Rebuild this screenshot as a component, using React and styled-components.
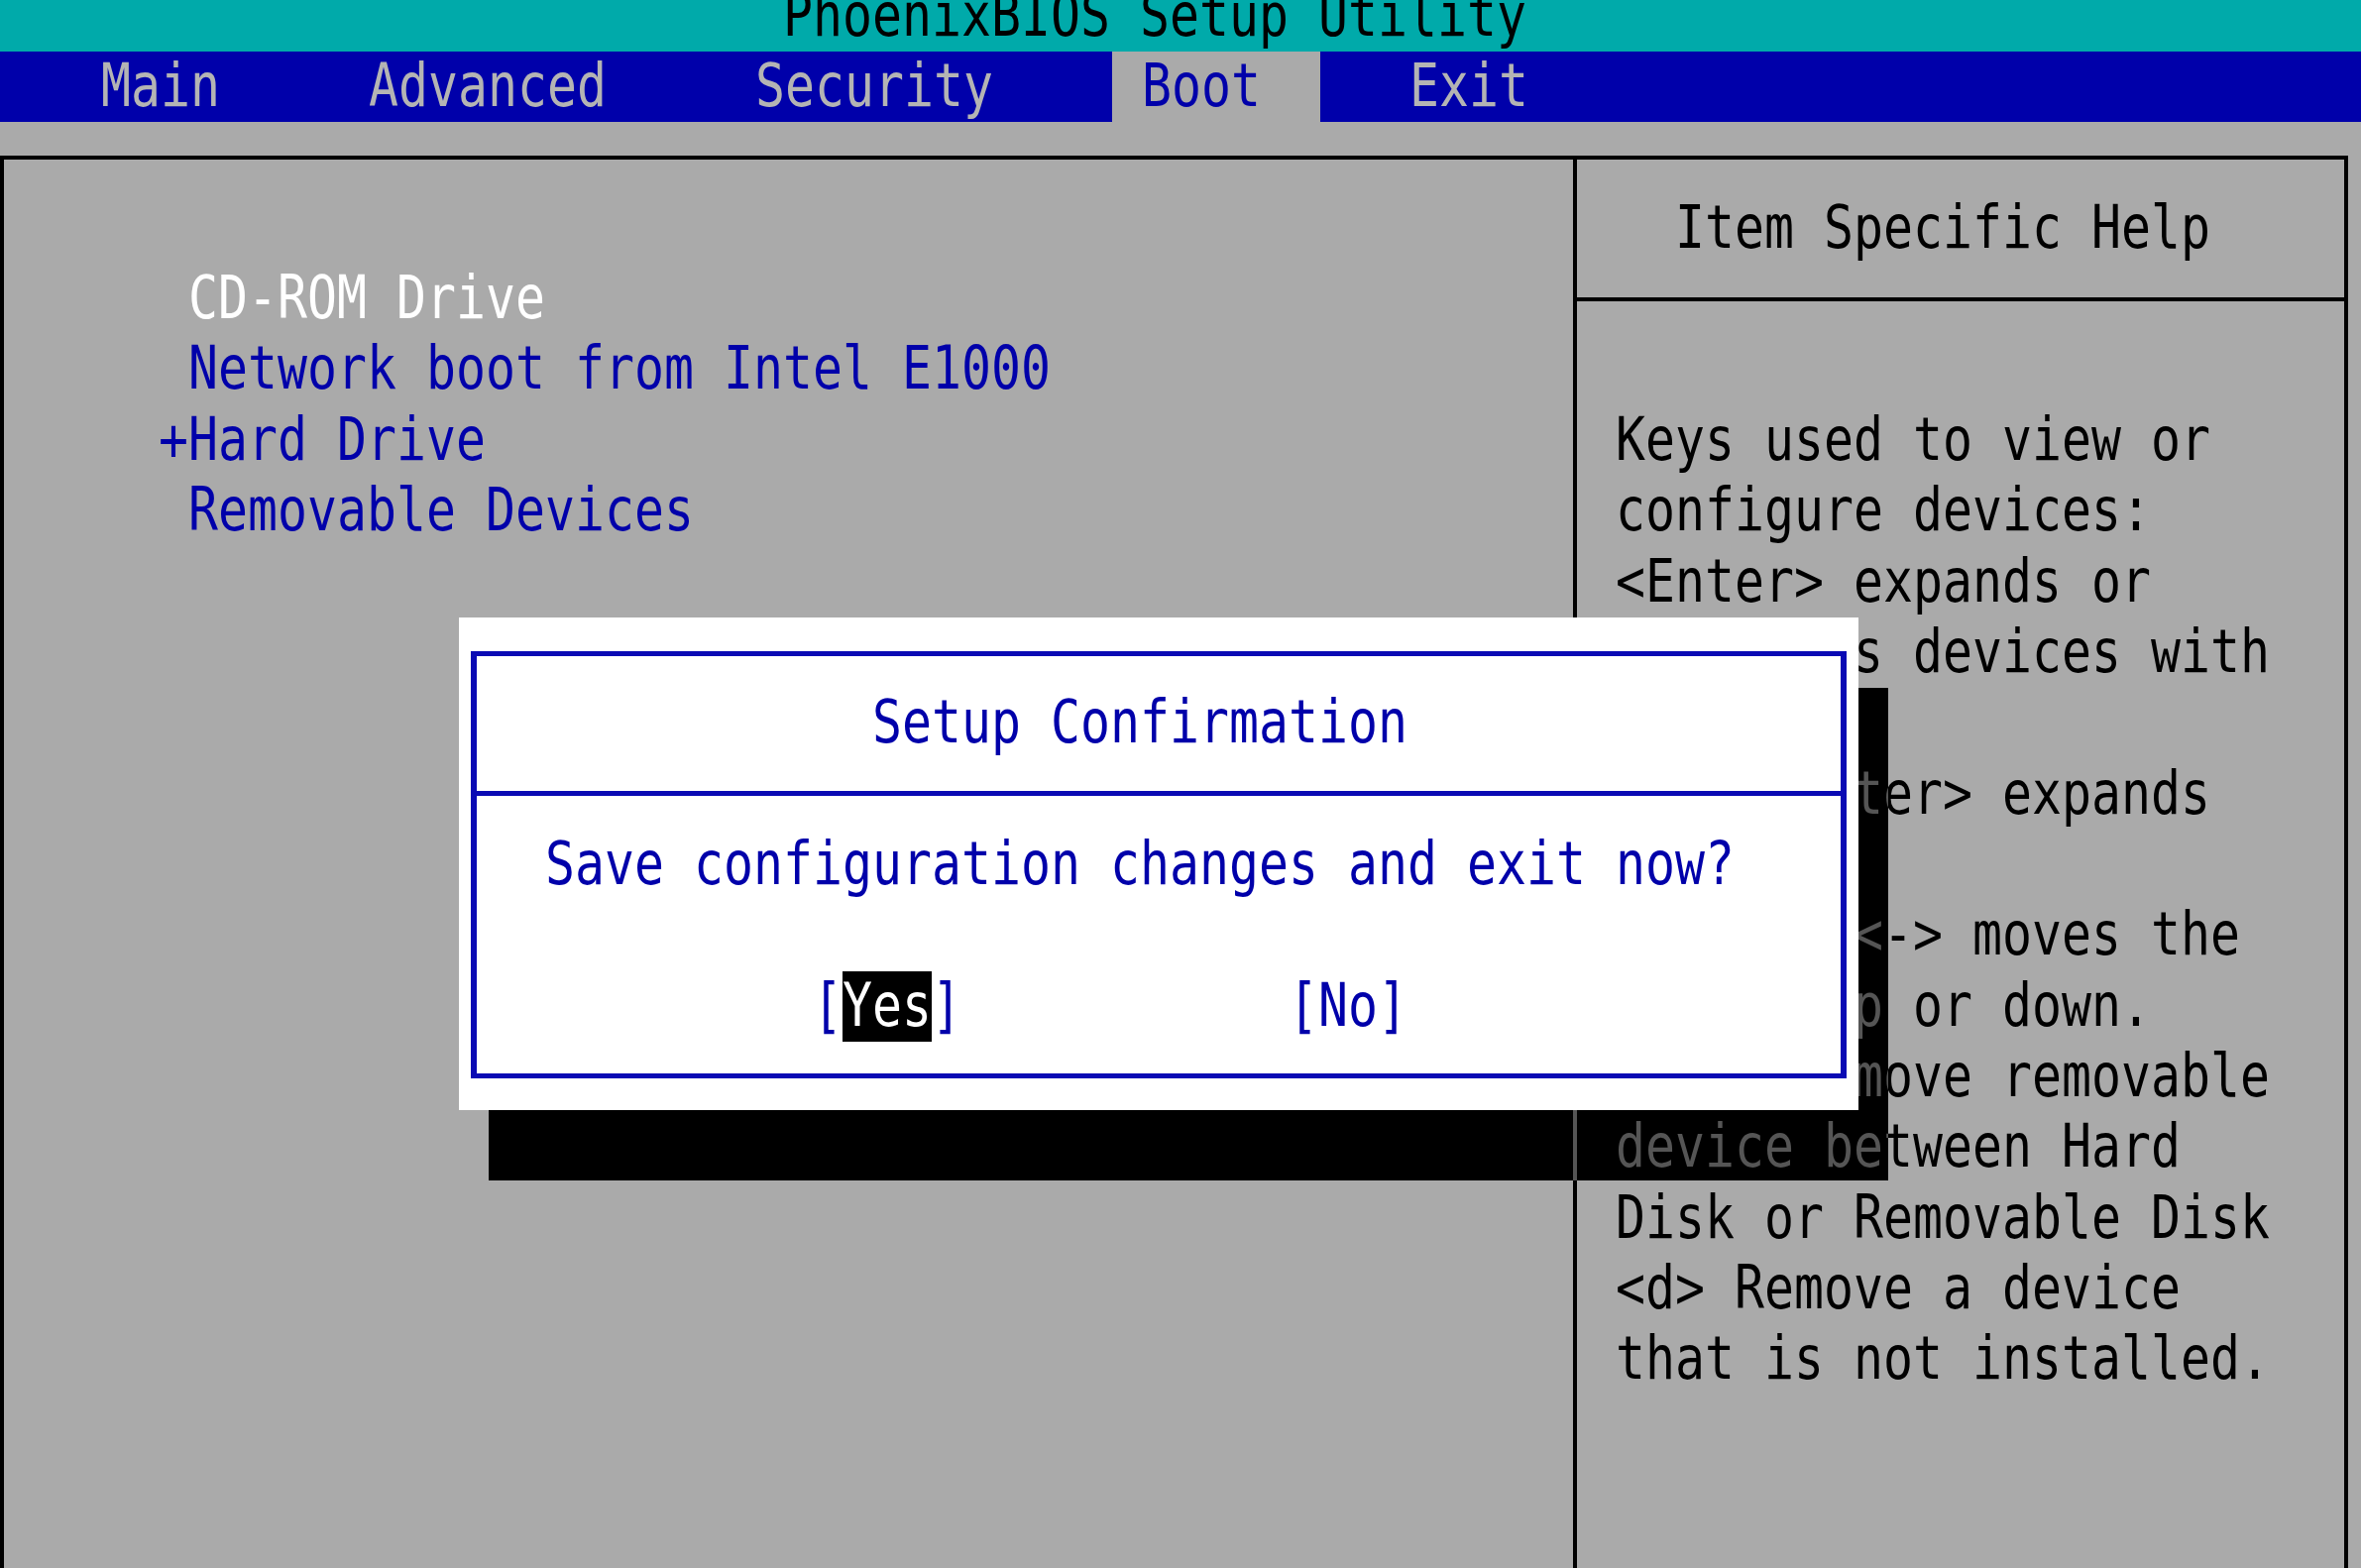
import React from 'react'
import styled, { createGlobalStyle } from 'styled-components'

// text-mode grid: one cell is 30px wide, one row 71.33px tall
const CELL = 30
const ROW = 71.33
const col = n => 10 + n * CELL

const CYAN = '#00aaaa'
const BLUE = '#0000aa'
const GRAY = '#aaaaaa'

const GlobalStyle = createGlobalStyle`
  html, body {
    margin: 0;
    padding: 0;
    background: ${GRAY};
    overflow: hidden;
  }
`

const Screen = styled.div`
  position: relative;
  width: 2382px;
  height: 1582px;
  overflow: hidden;
  background: ${GRAY};
  font-family: 'DejaVu Sans Mono', 'Liberation Mono', monospace;
  font-size: 49.83px;
  color: #000;
`

const Line = styled.div`
  height: ${ROW}px;
  line-height: ${ROW}px;
  white-space: pre;
  padding-left: ${props => props.indent || 0}px;
  color: ${props => props.color || 'inherit'};
  transform: scaleY(1.21);
`

const Glyphs = styled.span`
  display: inline-block;
  transform: scaleY(1.21);
`

const TitleBar = styled.header`
  height: 52px;
  background: ${CYAN};
  display: flex;
  flex-direction: column;
  justify-content: flex-end;
  overflow: hidden;
  flex-shrink: 0;
`

const MenuBar = styled.nav`
  height: ${ROW}px;
  line-height: ${ROW}px;
  background: ${BLUE};
  display: flex;
  gap: ${CELL * 2}px;
  padding-left: ${col(2) + 2}px;
  white-space: pre;
`

const Tab = styled.div`
  padding: 0 ${CELL * 2}px 0 ${CELL}px;
  background: ${props => (props.active ? GRAY : 'transparent')};
  color: ${props => (props.active ? BLUE : '#b4b4b4')};
`

const Body = styled.main`
  padding-top: 33.67px;
`

const Frame = styled.div`
  box-sizing: border-box;
  width: 2369px;
  height: 1425px;
  border: 4px solid #000;
  border-bottom: none;
  display: grid;
  grid-template-columns: 1583px 1fr;
  overflow: hidden;
`

const BootPanel = styled.section`
  padding-top: 105px;
  padding-left: ${col(5) - 4}px;
`

const HelpPanel = styled.aside`
  border-left: 4px solid #000;
  display: flex;
  flex-direction: column;
`

const HelpHeader = styled.div`
  box-sizing: border-box;
  height: 143px;
  padding-top: 34px;
  border-bottom: 4px solid #000;
`

const HelpBody = styled.div`
  padding-top: 105px;
`

const Shadow = styled.div`
  position: absolute;
  left: 493px;
  top: 694px;
  width: 1412px;
  height: 497px;
  background: ${props => props.tint};
  mix-blend-mode: ${props => props.blend};
  pointer-events: none;
`

const Dialog = styled.div`
  position: absolute;
  left: 463px;
  top: 623px;
  width: 1412px;
  height: 497px;
  box-sizing: border-box;
  background: #fff;
  padding: 34px 12px 32px 12px;
  color: ${BLUE};
`

const DialogBox = styled.div`
  box-sizing: border-box;
  height: 100%;
  border-style: solid;
  border-color: #0a0ab4;
  border-width: 5px 6px;
`

const DialogHead = styled.div`
  box-sizing: border-box;
  height: 141px;
  padding-top: 32px;
  border-bottom: 5px solid #0a0ab4;
`

const DialogMessage = styled.div`
  padding-top: 34px;
`

const Buttons = styled.div`
  display: flex;
  gap: ${CELL * 11}px;
  margin-top: ${ROW}px;
  padding-left: ${col(27) - 481}px;
  height: ${ROW}px;
  line-height: ${ROW}px;
  white-space: pre;
`

const Choice = styled.div`
  display: flex;
`

const Key = styled.span`
  display: inline-block;
  height: ${ROW}px;
  background: ${props => (props.selected ? '#000' : 'transparent')};
  color: ${props => (props.selected ? '#fff' : BLUE)};
`

const tabs = ['Main', 'Advanced', 'Security', 'Boot', 'Exit']

const bootOrder = [
  { label: ' CD-ROM Drive', color: '#ffffff' },
  { label: ' Network boot from Intel E1000', color: BLUE },
  { label: '+Hard Drive', color: BLUE },
  { label: ' Removable Devices', color: BLUE }
]

const help = [
  'Keys used to view or',
  'configure devices:',
  '<Enter> expands or',
  'collapses devices with',
  'a + or -',
  '<Ctrl+Enter> expands',
  'all',
  '<+> and <-> moves the',
  'device up or down.',
  '<n> May move removable',
  'device between Hard',
  'Disk or Removable Disk',
  '<d> Remove a device',
  'that is not installed.'
]

const helpLeft = 1591

export default function App() {
  return (
    <Screen>
      <GlobalStyle />
      <TitleBar>
        <Line indent={col(26)}>PhoenixBIOS Setup Utility</Line>
      </TitleBar>
      <MenuBar>
        {tabs.map(t => (
          <Tab key={t} active={t === 'Boot'}>
            <Glyphs>{t}</Glyphs>
          </Tab>
        ))}
      </MenuBar>
      <Body>
        <Frame>
          <BootPanel>
            {bootOrder.map(item => (
              <Line key={item.label} color={item.color}>
                {item.label}
              </Line>
            ))}
          </BootPanel>
          <HelpPanel>
            <HelpHeader>
              <Line indent={col(56) - helpLeft}>Item Specific Help</Line>
            </HelpHeader>
            <HelpBody>
              {help.map((text, i) => (
                <Line key={i} indent={col(54) - helpLeft}>
                  {text}
                </Line>
              ))}
            </HelpBody>
          </HelpPanel>
        </Frame>
      </Body>
      <Shadow tint={GRAY} blend="difference" />
      <Shadow tint="#808080" blend="multiply" />
      <Dialog>
        <DialogBox>
          <DialogHead>
            <Line indent={col(29) - 481}>Setup Confirmation</Line>
          </DialogHead>
          <DialogMessage>
            <Line indent={col(18) - 481}>
              Save configuration changes and exit now?
            </Line>
          </DialogMessage>
          <Buttons>
            <Choice>
              <Key><Glyphs>[</Glyphs></Key>
              <Key selected><Glyphs>Yes</Glyphs></Key>
              <Key><Glyphs>]</Glyphs></Key>
            </Choice>
            <Choice>
              <Key><Glyphs>[No]</Glyphs></Key>
            </Choice>
          </Buttons>
        </DialogBox>
      </Dialog>
    </Screen>
  )
}
